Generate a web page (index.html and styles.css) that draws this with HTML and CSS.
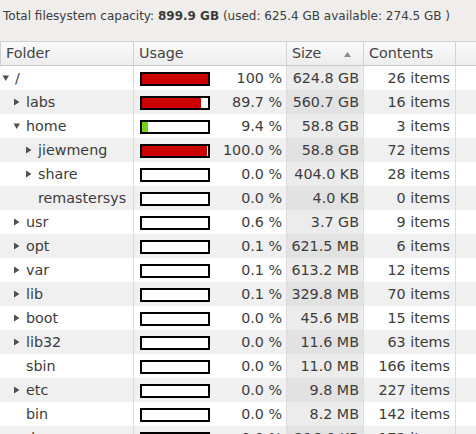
FILE: index.html
```html
<!DOCTYPE html>
<html>
<head>
<meta charset="utf-8">
<link rel="stylesheet" href="styles.css">
</head>
<body>
<div class="summary">Total filesystem capacity: <b>899.9 GB</b> (used: 625.4 GB available: 274.5 GB )</div>
<div class="tree">
  <div class="row head">
    <div class="cell c-folder">Folder</div>
    <div class="cell c-usage">Usage</div>
    <div class="cell c-size">Size<svg class="sort" width="7" height="5" viewBox="0 0 7 5"><polygon points="0,5 3.5,0 7,5" fill="#8a8a8a"/></svg></div>
    <div class="cell c-contents">Contents</div>
    <div class="cell c-extra"></div>
  </div>

  <div class="row">
    <div class="cell c-folder l0"><span class="exp"><svg width="8" height="8" viewBox="0 0 8 8"><polygon points="0.5,1.5 7,1.5 3.75,7" fill="#505050"/></svg></span><span class="name">/</span></div>
    <div class="cell c-usage"><span class="bar"><span class="fill red" style="width:100%"></span></span><span class="pct">100 %</span></div>
    <div class="cell c-size">624.8 GB</div>
    <div class="cell c-contents">26 items</div>
    <div class="cell c-extra"></div>
  </div>

  <div class="row alt">
    <div class="cell c-folder l1"><span class="exp"><svg width="8" height="8" viewBox="0 0 8 8"><polygon points="1,0.5 6.5,4 1,7.5" fill="#505050"/></svg></span><span class="name">labs</span></div>
    <div class="cell c-usage"><span class="bar"><span class="fill red" style="width:89.7%"></span></span><span class="pct">89.7 %</span></div>
    <div class="cell c-size">560.7 GB</div>
    <div class="cell c-contents">16 items</div>
    <div class="cell c-extra"></div>
  </div>

  <div class="row">
    <div class="cell c-folder l1"><span class="exp"><svg width="8" height="8" viewBox="0 0 8 8"><polygon points="0.5,1.5 7,1.5 3.75,7" fill="#505050"/></svg></span><span class="name">home</span></div>
    <div class="cell c-usage"><span class="bar"><span class="fill green" style="width:9.4%"></span></span><span class="pct">9.4 %</span></div>
    <div class="cell c-size">58.8 GB</div>
    <div class="cell c-contents">3 items</div>
    <div class="cell c-extra"></div>
  </div>

  <div class="row alt">
    <div class="cell c-folder l2"><span class="exp"><svg width="8" height="8" viewBox="0 0 8 8"><polygon points="1,0.5 6.5,4 1,7.5" fill="#505050"/></svg></span><span class="name">jiewmeng</span></div>
    <div class="cell c-usage"><span class="bar"><span class="fill red" style="width:98.5%"></span></span><span class="pct">100.0 %</span></div>
    <div class="cell c-size">58.8 GB</div>
    <div class="cell c-contents">72 items</div>
    <div class="cell c-extra"></div>
  </div>

  <div class="row">
    <div class="cell c-folder l2"><span class="exp"><svg width="8" height="8" viewBox="0 0 8 8"><polygon points="1,0.5 6.5,4 1,7.5" fill="#505050"/></svg></span><span class="name">share</span></div>
    <div class="cell c-usage"><span class="bar"></span><span class="pct">0.0 %</span></div>
    <div class="cell c-size">404.0 KB</div>
    <div class="cell c-contents">28 items</div>
    <div class="cell c-extra"></div>
  </div>

  <div class="row alt">
    <div class="cell c-folder l2"><span class="exp"></span><span class="name">remastersys</span></div>
    <div class="cell c-usage"><span class="bar"></span><span class="pct">0.0 %</span></div>
    <div class="cell c-size">4.0 KB</div>
    <div class="cell c-contents">0 items</div>
    <div class="cell c-extra"></div>
  </div>

  <div class="row">
    <div class="cell c-folder l1"><span class="exp"><svg width="8" height="8" viewBox="0 0 8 8"><polygon points="1,0.5 6.5,4 1,7.5" fill="#505050"/></svg></span><span class="name">usr</span></div>
    <div class="cell c-usage"><span class="bar"></span><span class="pct">0.6 %</span></div>
    <div class="cell c-size">3.7 GB</div>
    <div class="cell c-contents">9 items</div>
    <div class="cell c-extra"></div>
  </div>

  <div class="row alt">
    <div class="cell c-folder l1"><span class="exp"><svg width="8" height="8" viewBox="0 0 8 8"><polygon points="1,0.5 6.5,4 1,7.5" fill="#505050"/></svg></span><span class="name">opt</span></div>
    <div class="cell c-usage"><span class="bar"></span><span class="pct">0.1 %</span></div>
    <div class="cell c-size">621.5 MB</div>
    <div class="cell c-contents">6 items</div>
    <div class="cell c-extra"></div>
  </div>

  <div class="row">
    <div class="cell c-folder l1"><span class="exp"><svg width="8" height="8" viewBox="0 0 8 8"><polygon points="1,0.5 6.5,4 1,7.5" fill="#505050"/></svg></span><span class="name">var</span></div>
    <div class="cell c-usage"><span class="bar"></span><span class="pct">0.1 %</span></div>
    <div class="cell c-size">613.2 MB</div>
    <div class="cell c-contents">12 items</div>
    <div class="cell c-extra"></div>
  </div>

  <div class="row alt">
    <div class="cell c-folder l1"><span class="exp"><svg width="8" height="8" viewBox="0 0 8 8"><polygon points="1,0.5 6.5,4 1,7.5" fill="#505050"/></svg></span><span class="name">lib</span></div>
    <div class="cell c-usage"><span class="bar"></span><span class="pct">0.1 %</span></div>
    <div class="cell c-size">329.8 MB</div>
    <div class="cell c-contents">70 items</div>
    <div class="cell c-extra"></div>
  </div>

  <div class="row">
    <div class="cell c-folder l1"><span class="exp"><svg width="8" height="8" viewBox="0 0 8 8"><polygon points="1,0.5 6.5,4 1,7.5" fill="#505050"/></svg></span><span class="name">boot</span></div>
    <div class="cell c-usage"><span class="bar"></span><span class="pct">0.0 %</span></div>
    <div class="cell c-size">45.6 MB</div>
    <div class="cell c-contents">15 items</div>
    <div class="cell c-extra"></div>
  </div>

  <div class="row alt">
    <div class="cell c-folder l1"><span class="exp"><svg width="8" height="8" viewBox="0 0 8 8"><polygon points="1,0.5 6.5,4 1,7.5" fill="#505050"/></svg></span><span class="name">lib32</span></div>
    <div class="cell c-usage"><span class="bar"></span><span class="pct">0.0 %</span></div>
    <div class="cell c-size">11.6 MB</div>
    <div class="cell c-contents">63 items</div>
    <div class="cell c-extra"></div>
  </div>

  <div class="row">
    <div class="cell c-folder l1"><span class="exp"></span><span class="name">sbin</span></div>
    <div class="cell c-usage"><span class="bar"></span><span class="pct">0.0 %</span></div>
    <div class="cell c-size">11.0 MB</div>
    <div class="cell c-contents">166 items</div>
    <div class="cell c-extra"></div>
  </div>

  <div class="row alt">
    <div class="cell c-folder l1"><span class="exp"><svg width="8" height="8" viewBox="0 0 8 8"><polygon points="1,0.5 6.5,4 1,7.5" fill="#505050"/></svg></span><span class="name">etc</span></div>
    <div class="cell c-usage"><span class="bar"></span><span class="pct">0.0 %</span></div>
    <div class="cell c-size">9.8 MB</div>
    <div class="cell c-contents">227 items</div>
    <div class="cell c-extra"></div>
  </div>

  <div class="row">
    <div class="cell c-folder l1"><span class="exp"></span><span class="name">bin</span></div>
    <div class="cell c-usage"><span class="bar"></span><span class="pct">0.0 %</span></div>
    <div class="cell c-size">8.2 MB</div>
    <div class="cell c-contents">142 items</div>
    <div class="cell c-extra"></div>
  </div>

  <div class="row alt">
    <div class="cell c-folder l1"><span class="exp"><svg width="8" height="8" viewBox="0 0 8 8"><polygon points="1,0.5 6.5,4 1,7.5" fill="#505050"/></svg></span><span class="name">dev</span></div>
    <div class="cell c-usage"><span class="bar"></span><span class="pct">0.0 %</span></div>
    <div class="cell c-size">216.0 KB</div>
    <div class="cell c-contents">172 items</div>
    <div class="cell c-extra"></div>
  </div>
</div>
</body>
</html>
```

FILE: styles.css
```css
html, body {
  margin: 0;
  padding: 0;
  background: #efeeed;
  height: 434px;
  overflow: hidden;
}

body {
  font-family: "DejaVu Sans", "Liberation Sans", sans-serif;
  color: #3c3c3c;
}

.summary {
  height: 41px;
  box-sizing: border-box;
  padding: 9px 0 0 3px;
  font-size: 12px;
  line-height: 14px;
  color: #3c3c3c;
  white-space: nowrap;
}

.summary b {
  font-weight: bold;
}

.tree {
  background: #ffffff;
  font-size: 14.3px;
}

.row {
  display: grid;
  grid-template-columns: 134px 153px 77px 92px 1fr;
  height: 24px;
  background: #ffffff;
}

.row.alt {
  background: #f0f0f0;
}

.cell {
  display: flex;
  align-items: center;
  box-sizing: border-box;
  border-right: 1px solid #dcdcdc;
  white-space: nowrap;
  overflow: hidden;
  line-height: 24px;
}

.c-extra {
  border-right: none;
}

.row .c-size {
  background: #ececec;
  justify-content: flex-end;
  padding-right: 4px;
}

.row.alt .c-size {
  background: #e2e2e2;
}

.c-contents {
  justify-content: flex-end;
  padding-right: 5px;
}

/* header */
.row.head {
  height: 25px;
  background: linear-gradient(#fafafa, #ededed);
  border-top: 1px solid #cfcfcf;
  border-bottom: 1px solid #c8c8c8;
  box-sizing: border-box;
  color: #444444;
}

.row.head .cell {
  justify-content: flex-start;
  padding: 0 0 0 5px;
  line-height: 23px;
  background: transparent;
  border-right: 1px solid #d2d2d2;
}

.row.head .c-folder {
  border-left: 1px solid #cfcfcf;
  padding-left: 5px;
}

.row.head .c-extra {
  border-right: none;
}

.row.head .c-size {
  position: relative;
}

.sort {
  margin-left: 23px;
  margin-top: 1px;
}

/* folder column */
.c-folder {
  padding-left: 2px;
}

.c-folder.l1 {
  padding-left: 13px;
}

.c-folder.l2 {
  padding-left: 25px;
}

.exp {
  display: inline-flex;
  align-items: center;
  width: 13px;
  height: 24px;
  flex: none;
}

.name {
  color: #3c3c3c;
}

/* usage column */
.c-usage {
  padding-left: 6px;
  padding-right: 4px;
}

.bar {
  display: block;
  flex: none;
  width: 70px;
  height: 14px;
  margin-top: 1px;
  box-sizing: border-box;
  border: 2px solid #000000;
  background: #ffffff;
  overflow: hidden;
}

.fill {
  display: block;
  height: 100%;
}

.fill.red {
  background: #cc0000;
}

.fill.green {
  background: #73d216;
}

.pct {
  flex: 1;
  text-align: right;
}
```
